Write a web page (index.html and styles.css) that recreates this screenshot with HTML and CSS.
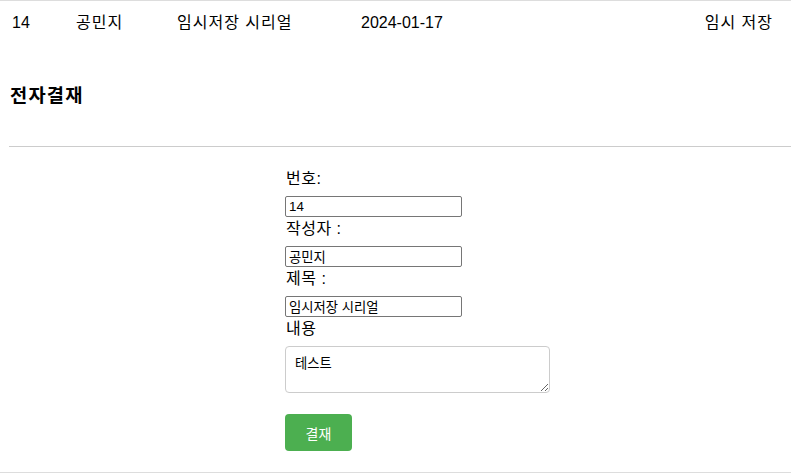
FILE: index.html
```html
<!DOCTYPE html>
<html lang="ko">
<head>
    <meta charset="UTF-8">
    <meta name="viewport" content="width=device-width, initial-scale=1.0">
    <title>전자결재</title>
    <link rel="stylesheet" href="styles.css">
</head>
<body>
    <!-- 목록 마지막 행 -->
    <div class="doc-list">
        <div class="doc-row">
            <span class="cell">14</span>
            <span class="cell ko">공민지</span>
            <span class="cell ko">임시저장 시리얼</span>
            <span class="cell">2024-01-17</span>
            <span class="cell ko status">임시 저장</span>
        </div>
    </div>

    <div class="section">
        <h3>전자결재</h3>
        <hr>
    </div>

    <form class="approval-form">
        <label for="doc-no">번호:</label>
        <input type="text" id="doc-no" value="14">
        <label for="writer">작성자 :</label>
        <input type="text" id="writer" value="공민지">
        <label for="title">제목 :</label>
        <input type="text" id="title" value="임시저장 시리얼">
        <label for="content">내용</label>
        <textarea id="content">테스트</textarea>
        <button type="submit">결재</button>
    </form>

    <div class="footer-line"></div>
</body>
</html>
```

FILE: styles.css
```css
body {
    font-family: "Liberation Sans", "Noto Sans CJK KR", sans-serif;
    margin: 0;
    color: #000;
    background-color: #fff;
}

.doc-list {
    border-top: 1px solid #ddd;
}

.doc-row {
    display: grid;
    grid-template-columns: 64px 101px 184px 1fr auto;
    font-size: 16px;
    line-height: 20px;
}

.doc-row .cell {
    padding: 12px 0 12px 12px;
    white-space: nowrap;
}

.doc-row .ko {
    letter-spacing: 1px;
}

.doc-row .status {
    padding-right: 18px;
}

.section {
    padding-left: 9px;
}

.section h3 {
    font-size: 18.72px;
    line-height: 23px;
    letter-spacing: 1.2px;
    margin: 39px 0 39px 1px;
}

.section hr {
    border: none;
    border-top: 1px solid #ccc;
    margin: 0;
}

.approval-form {
    width: 221px;
    margin: 0 auto;
    padding-top: 20px;
    padding-bottom: 21px;
}

.approval-form label {
    display: block;
    font-size: 16px;
    line-height: 23px;
    letter-spacing: 0.5px;
    margin-bottom: 6px;
    padding-left: 1px;
}

.approval-form input {
    display: block;
    box-sizing: border-box;
    width: 177px;
    height: 21px;
    padding: 1px 3px;
    font-family: "Liberation Sans", "Noto Sans CJK KR", sans-serif;
    font-size: 13.33px;
    border: 1px solid #767676;
    border-radius: 2px;
    margin: 0;
}

.approval-form textarea {
    display: block;
    box-sizing: border-box;
    width: 265px;
    height: 47px;
    padding: 9px 9px;
    font-family: "Liberation Sans", "Noto Sans CJK KR", sans-serif;
    font-size: 13.33px;
    line-height: 16px;
    border: 1px solid #ccc;
    border-radius: 4px;
    margin: 0 0 21px 0;
}

.approval-form button {
    display: block;
    width: 67px;
    height: 37px;
    background-color: #4caf50;
    color: white;
    border: none;
    border-radius: 4px;
    font-family: "Liberation Sans", "Noto Sans CJK KR", sans-serif;
    font-size: 14px;
    cursor: pointer;
}

.approval-form button:hover {
    background-color: #45a049;
}

.footer-line {
    border-top: 1px solid #ddd;
}
```
